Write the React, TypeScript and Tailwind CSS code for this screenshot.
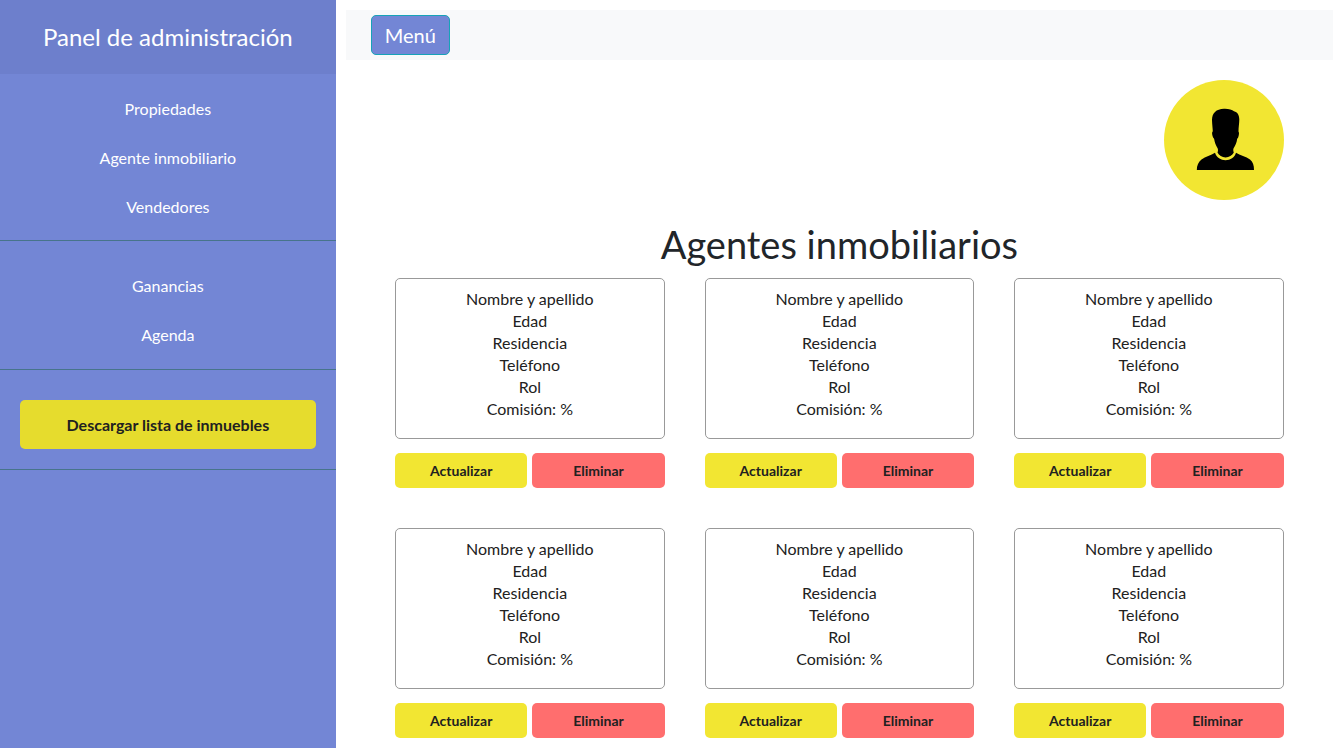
const mainLinks = ["Propiedades", "Agente inmobiliario", "Vendedores"];
const extraLinks = ["Ganancias", "Agenda"];
const fields = ["Nombre y apellido", "Edad", "Residencia", "Teléfono", "Rol", "Comisión: %"];
const agents = [1, 2, 3, 4, 5, 6];

function NavLinks({ items, className }: { items: string[]; className: string }) {
  return (
    <ul className={`border-b border-[#47748b] ${className}`}>
      {items.map((item) => (
        <li key={item}>
          <a href="#" className="flex h-[49px] items-center justify-center text-white">
            {item}
          </a>
        </li>
      ))}
    </ul>
  );
}

function Sidebar() {
  return (
    <aside className="w-1/4 shrink-0 bg-[#7386d5] text-center">
      <div className="bg-[#6d7fcc] px-5 py-[22px]">
        <h3 className="text-2xl leading-[30px] text-white">Panel de administración</h3>
      </div>
      <nav>
        <NavLinks items={mainLinks} className="pt-[10px] pb-[9px]" />
        <NavLinks items={extraLinks} className="pt-5 pb-[10px]" />
        <div className="border-b border-[#47748b] px-5 pt-[30px] pb-5">
          <a
            href="#"
            className="flex h-[49px] items-center justify-center rounded-[5px] bg-[#e6dc2d] font-bold text-[#212121]"
          >
            Descargar lista de inmuebles
          </a>
        </div>
      </nav>
    </aside>
  );
}

function Avatar() {
  return (
    <div className="ml-auto flex size-[120px] items-center justify-center rounded-full bg-[#f2e632]">
      <svg viewBox="0 0 120 120" className="size-full" role="img" aria-label="Usuario">
        <path d="M60 28.700C64.500 28.500 68 29.700 70 31.300C73.500 32 75.300 35.500 75.300 39.500C75.300 43 74.500 47 74.500 51.500C75.300 52.500 75 54.500 74.600 56C74.300 57.300 73.900 58.200 73.200 58.800C72.800 62.500 71.200 66 69.600 68.200C69 69.500 69.300 71 69.800 72.500C68.300 75.600 65 77.400 61.600 77.400C58 77.400 55 75.600 53.500 72.500C54.100 71 54.200 69.500 53.600 68.200C51.800 65.500 50.600 62 50.100 58.800C49.200 58 48.600 56.500 48.300 55C48 53.500 48 52 48.800 51.300C48.700 48 48.100 44 48 40C48 33 52 29 60 28.700Z" />
        <path d="M51 72.800C52.500 77.500 56.800 80.300 61.500 80.300C66.500 80.300 70.500 77.500 72 72.800C76 75.500 82 76.500 86 79.500C89 82 90 85.500 90 90H32.800C32.800 85.500 34.500 82 37.500 79.500C41.500 76.500 47 75.500 51 72.800Z" />
      </svg>
    </div>
  );
}

function AgentCard() {
  return (
    <article>
      <ul className="rounded-[5px] border border-[#999999] px-4 pt-[9px] pb-[18px] text-center leading-[22px]">
        {fields.map((field) => (
          <li key={field}>{field}</li>
        ))}
      </ul>
      <div className="mt-[14px] grid grid-cols-2 gap-[5px] text-sm font-bold">
        <button type="button" className="h-[35px] rounded-[5px] bg-[#f2e632]">
          Actualizar
        </button>
        <button type="button" className="h-[35px] rounded-[5px] bg-[#ff6e6e]">
          Eliminar
        </button>
      </div>
    </article>
  );
}

export default function App() {
  return (
    <div className="flex min-h-screen bg-white font-['Lato',sans-serif] text-base text-[#212121]">
      <Sidebar />
      <main className="min-w-0 flex-1 p-[10px]">
        <header className="bg-[#f8f9fa] px-[25px] py-[5px]">
          <button
            type="button"
            className="block h-10 rounded-[5px] border border-[#17a2b8] bg-[#7386d5] px-[13px] text-xl text-white"
          >
            Menú
          </button>
        </header>
        <div className="mx-auto w-[90%] pt-5">
          <Avatar />
          <h1 className="mt-5 mb-[10px] text-center text-[38px] leading-[48px] text-[#212529]">
            Agentes inmobiliarios
          </h1>
          <div className="grid grid-cols-3 gap-10">
            {agents.map((id) => (
              <AgentCard key={id} />
            ))}
          </div>
        </div>
      </main>
    </div>
  );
}
